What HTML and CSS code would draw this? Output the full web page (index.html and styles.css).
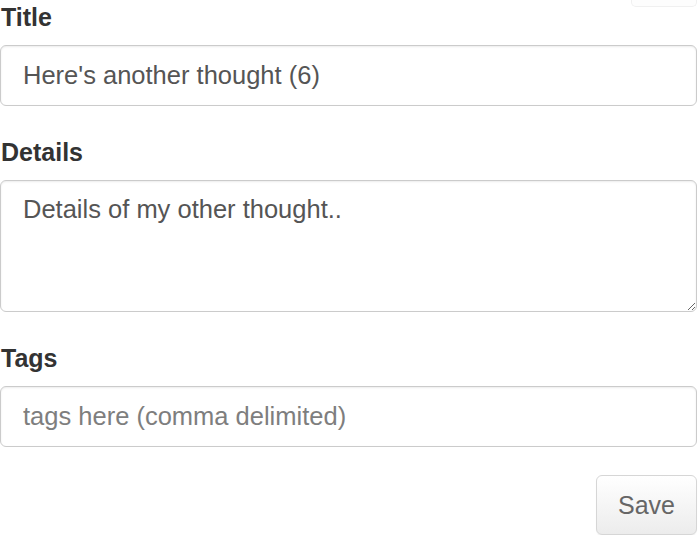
FILE: index.html
```html
<!DOCTYPE html>
<html>
<head>
<meta charset="utf-8">
<link rel="stylesheet" href="styles.css">
</head>
<body>
<form class="form">
  <div class="group">
    <div class="label-row">
      <label class="label" for="title">Title</label>
      <div class="stub"></div>
    </div>
    <input id="title" class="control" type="text" value="Here's another thought (6)">
  </div>
  <div class="group">
    <label class="label" for="details">Details</label>
    <textarea id="details" class="control area">Details of my other thought..</textarea>
  </div>
  <div class="group">
    <label class="label" for="tags">Tags</label>
    <input id="tags" class="control" type="text" placeholder="tags here (comma delimited)">
  </div>
  <div class="actions">
    <button type="button" class="btn">Save</button>
  </div>
</form>
</body>
</html>
```
FILE: styles.css
```css
html, body {
  margin: 0;
  padding: 0;
  background: #fff;
}
body {
  font-family: "Liberation Sans", Arial, sans-serif;
  color: #333;
  overflow: hidden;
}
.form {
  width: 697px;
  display: flex;
  flex-direction: column;
}
.group {
  display: flex;
  flex-direction: column;
  margin-bottom: 29px;
}
.label-row {
  display: flex;
  justify-content: space-between;
  align-items: flex-start;
}
.stub {
  width: 64px;
  height: 6px;
  border: 1px solid #f0f0f0;
  border-top: none;
  border-radius: 0 0 5px 5px;
  background: #fdfdfd;
}
.label {
  display: block;
  font-weight: bold;
  font-size: 25px;
  line-height: 35px;
  margin-bottom: 10px;
  padding-left: 1px;
  color: #333;
}
.control {
  box-sizing: border-box;
  display: block;
  width: 697px;
  height: 61px;
  margin: 0;
  padding: 0 22px;
  font-family: "Liberation Sans", Arial, sans-serif;
  font-size: 25.5px;
  color: #555;
  background: #fff;
  border: 1px solid #cbcbcb;
  border-radius: 6px;
  box-shadow: inset 0 1px 2px rgba(0, 0, 0, 0.08);
  outline: none;
}
.control::placeholder {
  color: #7e7e7e;
}
.area {
  height: 132px;
  padding: 11px 22px;
  line-height: 35px;
  resize: vertical;
}
.actions {
  display: flex;
  justify-content: flex-end;
  margin-top: -1px;
}
.btn {
  box-sizing: border-box;
  width: 101px;
  height: 60px;
  font-family: "Liberation Sans", Arial, sans-serif;
  font-size: 25px;
  color: #666;
  background: linear-gradient(#ffffff, #ececec);
  border: 1px solid #d6d6d6;
  border-radius: 6px;
  padding: 0;
  box-shadow: 0 1px 1px rgba(0, 0, 0, 0.05);
}
```
